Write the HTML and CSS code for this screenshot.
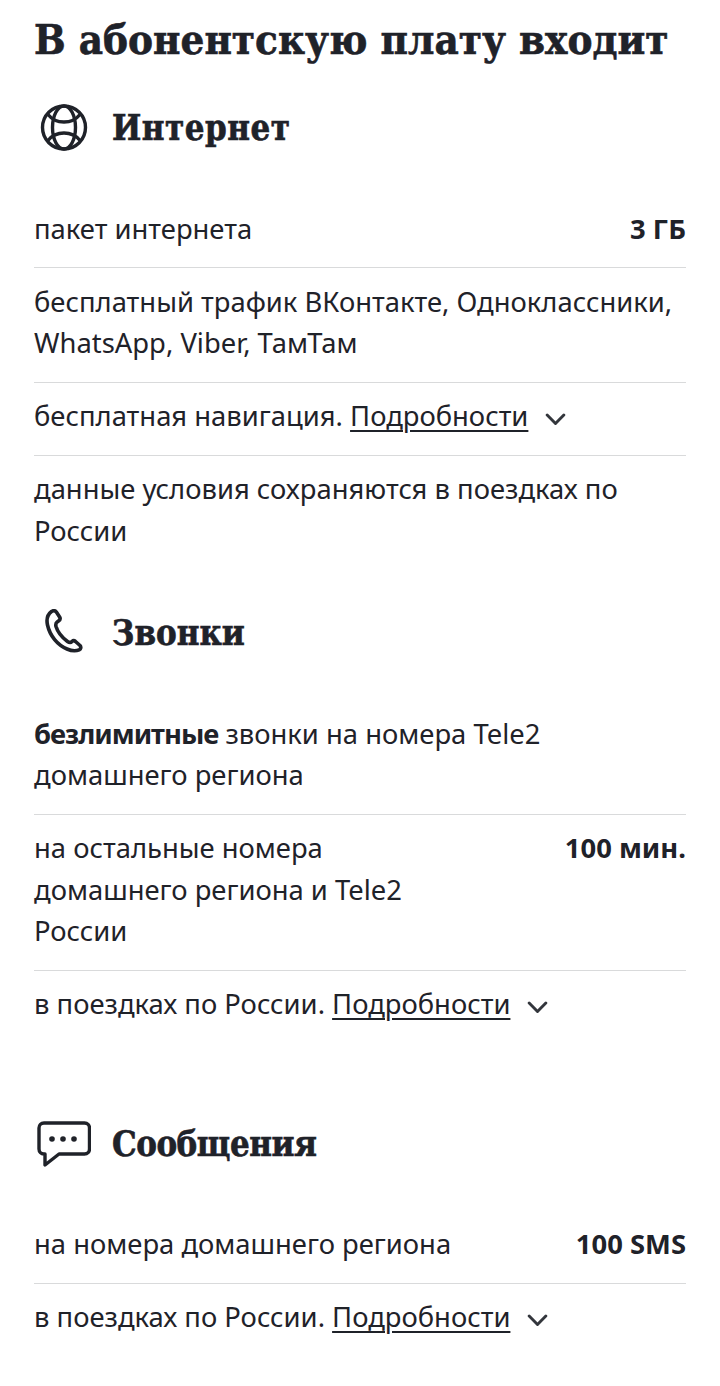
FILE: index.html
```html
<!DOCTYPE html>
<html lang="ru">
<head>
<meta charset="utf-8">
<title>В абонентскую плату входит</title>
<link rel="stylesheet" href="styles.css">
</head>
<body>
<main class="page">
  <h1 class="title">В абонентскую плату входит</h1>

  <section class="group group-internet">
    <h2 class="group-head">
      <svg class="icon" viewBox="0 0 48 48" fill="none" stroke="currentColor" stroke-width="3.400"><circle cx="24" cy="23.500" r="21.500"/><ellipse cx="24" cy="23.500" rx="11.500" ry="21.500"/><path d="M8 10.500c4 5 10 7.500 16 7.500s12-2.500 16-7.500M8 36.500c4-5 10-7.500 16-7.500s12 2.500 16 7.500" /></svg>
      <span class="wide">Интернет</span>
    </h2>
    <ul class="rows">
      <li class="row"><span>пакет интернета</span><b class="val">3 ГБ</b></li>
      <li class="row"><span>бесплатный трафик ВКонтакте, Одноклассники, WhatsApp, Viber, ТамТам</span></li>
      <li class="row"><span>бесплатная навигация. <a class="more">Подробности</a><svg class="chev" viewBox="0 0 20 12" fill="none" stroke="currentColor" stroke-width="2.800" stroke-linecap="round" stroke-linejoin="round"><path d="M2 2l8 8 8-8"/></svg></span></li>
      <li class="row"><span>данные условия сохраняются в поездках по России</span></li>
    </ul>
  </section>

  <section class="group group-calls">
    <h2 class="group-head">
      <svg class="icon" viewBox="0 0 48 48" fill="none" stroke="currentColor" stroke-width="3.600" stroke-linejoin="round"><path d="M11.500 2.500C13.500 1.200 15.500 1.800 16.700 3.500L19.600 8C20.500 9.500 20 11 18.500 12L17 13.200C15.800 14.200 15.500 15.500 16 17.500C17.500 22.500 21.500 28 27.500 32.500C29.300 33.800 30.800 33.800 32 32.500C33 31.500 34.300 31.500 35.500 32.500L40 36.500C41.300 38 41 40 39.200 40.800C36 42.200 31.500 42 27 40C17.500 36 10 27 7.500 16C6.300 10.500 7.500 5.500 11.500 2.500Z"/></svg>
      <span>Звонки</span>
    </h2>
    <ul class="rows">
      <li class="row"><span><b class="lead">безлимитные</b> звонки на номера Tele2 домашнего региона</span></li>
      <li class="row"><span class="narrow">на остальные номера домашнего региона и Tele2 России</span><b class="val">100 мин.</b></li>
      <li class="row"><span>в поездках по России. <a class="more">Подробности</a><svg class="chev" viewBox="0 0 20 12" fill="none" stroke="currentColor" stroke-width="2.800" stroke-linecap="round" stroke-linejoin="round"><path d="M2 2l8 8 8-8"/></svg></span></li>
    </ul>
  </section>

  <section class="group group-sms">
    <h2 class="group-head">
      <svg class="icon icon-sms" viewBox="0 0 54 46" fill="none" stroke="currentColor" stroke-width="3.400" stroke-linejoin="round"><path d="M7 2h40.500c3 0 5 2 5 5v21c0 3-2 5-5 5H22L8 44V33H7c-3 0-5-2-5-5V7c0-3 2-5 5-5Z"/><circle cx="15" cy="18" r="2.800" fill="currentColor" stroke="none"/><circle cx="26" cy="18" r="2.800" fill="currentColor" stroke="none"/><circle cx="37" cy="18" r="2.800" fill="currentColor" stroke="none"/></svg>
      <span class="tight">Сообщения</span>
    </h2>
    <ul class="rows">
      <li class="row"><span>на номера домашнего региона</span><b class="val">100 SMS</b></li>
      <li class="row"><span>в поездках по России. <a class="more">Подробности</a><svg class="chev" viewBox="0 0 20 12" fill="none" stroke="currentColor" stroke-width="2.800" stroke-linecap="round" stroke-linejoin="round"><path d="M2 2l8 8 8-8"/></svg></span></li>
    </ul>
  </section>
</main>
</body>
</html>
```
FILE: styles.css
```css
* { box-sizing: border-box; }
html, body { margin: 0; padding: 0; background: #fff; }
body { color: #1f2229; font-family: "Noto Sans", "Open Sans", sans-serif; font-size: 27.4px; line-height: 41.5px; }
.page { padding: 12px 34px 0; }
.title { margin: 0; font-family: "DejaVu Serif", serif; font-stretch: condensed; font-weight: 700; font-size: 41.7px; line-height: 56px; white-space: nowrap; -webkit-text-stroke: 0.6px #1f2229; }
.group-head { display: flex; align-items: center; gap: 24px; margin: 0; font-family: "DejaVu Serif", serif; font-stretch: condensed; font-weight: 700; font-size: 34.5px; line-height: 48px; -webkit-text-stroke: 0.6px #1f2229; }
.wide { letter-spacing: 0.5px; }
.tight { letter-spacing: -0.5px; }
.icon { width: 48px; height: 48px; margin-left: 6px; flex: none; color: #1f2229; }
.icon-sms { width: 54px; height: 46px; margin-left: 3px; margin-right: -3px; }
.group-internet { margin-top: 36px; }
.group-calls { margin-top: 40px; }
.group-sms { margin-top: 77px; }
.rows { list-style: none; margin: 43px 0 0; padding: 0; }
.row { display: flex; justify-content: space-between; gap: 24px; padding: 12.5px 0 18px; border-bottom: 1px solid #d9dadb; }
.row:last-child { border-bottom: 0; }
.narrow { width: 400px; }
.val { white-space: nowrap; font-weight: 700; }
.lead { letter-spacing: -1px; }
.more { text-decoration: underline; text-decoration-thickness: 2px; text-underline-offset: 4px; }
.chev { width: 21px; height: 12.5px; margin-left: 17px; vertical-align: 1px; color: #33363c; }
```
